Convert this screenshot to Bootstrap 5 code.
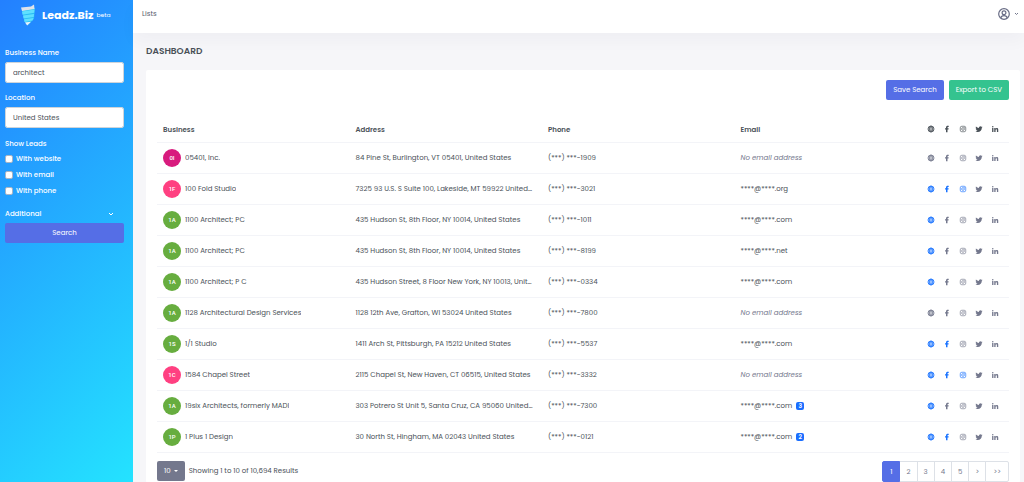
<!DOCTYPE html>
<html lang="en">
<head>
<meta charset="utf-8">
<meta name="viewport" content="width=device-width, initial-scale=1">
<title>Leadz.Biz – Dashboard</title>
<link href="https://cdn.jsdelivr.net/npm/bootstrap@5.3.0/dist/css/bootstrap.min.css" rel="stylesheet">
<style>
  body { font-family: Poppins, Inter, "Liberation Sans", sans-serif; font-size: 7px; line-height: 10px; color: #495057; background: #f6f6f9; }
  .sidebar { flex: 0 0 133px; padding: 4px 9px 0 5px; color: #fff; font-weight: 500; background: linear-gradient(135deg, #2380ff 0%, #24e3ff 100%); }
  .brand { height: 22px; margin-bottom: 22px; padding-left: 15px; gap: 5px; color: #fff; font-size: 11px; font-weight: 700; }
  .brand svg { width: 17px; height: 22px; }
  .brand small { font-size: 6px; font-weight: 400; margin-left: -2px; }
  .sidebar .form-label { display: block; margin-bottom: 4px; }
  .sidebar .form-control { height: 21px; padding: 0 7px; margin-bottom: 10px; font-size: 7px; line-height: 10px; border: 1px solid #ced4da; border-radius: 2px; color: #495057; }
  .sidebar fieldset { padding-top: 1px; }
  .checks { gap: 6px; margin-bottom: 13px; padding-top: 1px; }
  .checks label { display: flex; align-items: center; gap: 3px; }
  .checks input { appearance: none; width: 8px; height: 8px; margin: 0; background: #fff; border: 1px solid #a9b4c4; border-radius: 2px; }
  .checks input:checked { background: #556ee6; }
  .btn { font-size: 7px; line-height: 10px; padding: 5px 7px; border: 0; border-radius: 2px; color: #fff; }
  .btn-violet, .btn-violet:hover { background: #556ee6; color: #fff; }
  .btn-mint, .btn-mint:hover { background: #34c38f; color: #fff; }
  .btn-slate, .btn-slate:hover { background: #74788d; color: #fff; }
  .btn.dropdown-toggle::after { border-width: 2px 2px 0; vertical-align: 1px; margin-left: 3px; }
  .actions { gap: 5px; }
  .plain-btn { border: 0; background: none; padding: 0; color: inherit; font-weight: inherit; }
  .topbar { height: 33px; padding: 0 5px 5px 9px; background: #fff; box-shadow: 0 8px 16px rgba(18, 38, 63, .03); }
  .topbar a { color: #555b6d; text-decoration: none; }
  .content { padding: 13px 4px 0 13px; }
  .content h1 { margin: 0 0 14px; font-size: 9px; line-height: 10px; font-weight: 600; }
  .panel { background: #fff; border-radius: 2px; padding: 10px 11px 1px; }
  .leads { table-layout: fixed; margin: 16px 0 8px; color: #495057; }
  .leads th, .leads td { height: 31px; padding: 1px 6px 0; vertical-align: middle; border-bottom: 1px solid #f3f4f8; background: none; color: inherit; }
  .leads thead th { height: 26px; padding-top: 2px; font-weight: 600; }
  .leads .links-col { width: 82px; padding: 0; }
  .leads em { color: #74788d; }
  .links { gap: 8px; }
  .links a, .links span { display: block; width: 8px; height: 8px; color: #74788d; }
  .links a.on { color: #1a73ff; }
  thead .links span { color: #495057; }
  .links svg { display: block; width: 8px; height: 8px; }
  .avatar { flex: 0 0 18px; height: 18px; border-radius: 50%; color: #fff; font-family: Roboto, sans-serif; font-size: 6px; font-weight: 500; }
  .count { background: #1a6eff; color: #fff; border-radius: 2px; padding: 0 2px; font-size: 6px; line-height: 8px; min-width: 8px; font-weight: 600; }
  .pagination { --bs-pagination-color: #74788d; --bs-pagination-border-color: #dde1e7; --bs-pagination-font-size: 7px; --bs-pagination-padding-x: 6px; --bs-pagination-padding-y: 4px; --bs-pagination-border-radius: 2px; --bs-pagination-active-bg: #556ee6; --bs-pagination-active-border-color: #556ee6; }
  .page-link { line-height: 11px; text-align: center; min-width: 18px; }
  .page-item:last-child .page-link { padding-left: 7px; padding-right: 7px; }
</style>
</head>
<body>
<svg class="d-none" aria-hidden="true">
  <symbol id="web" viewBox="0 0 16 16"><g fill="none" stroke="currentColor" stroke-width="1.7"><circle cx="8" cy="8" r="6"/><ellipse cx="8" cy="8" rx="2.700" ry="6"/><path d="M2.500 5.800h11M2.500 10.200h11"/></g></symbol>
  <symbol id="facebook" viewBox="0 0 16 16"><path fill="currentColor" d="M6 14.500V9H4V6.400H6V4.800C6 2.600 7.400 1.500 9.500 1.500h1.900v2.400h-1.200C9.300 3.900 9 4.300 9 5v1.400h2.300L11 9H9v5.500z"/></symbol>
  <symbol id="instagram" viewBox="0 0 16 16"><g fill="none" stroke="currentColor" stroke-width="1.300"><rect x="2.500" y="2.500" width="11" height="11" rx="3.200"/><circle cx="8" cy="8" r="2.700"/></g><circle cx="11.200" cy="4.800" r=".9" fill="currentColor"/></symbol>
  <symbol id="twitter" viewBox="-1 -1 18 18"><path fill="currentColor" d="M5 15c6 0 9.300-5 9.300-9.300v-.4A6.600 6.600 0 0 0 16 3.500a6.500 6.500 0 0 1-1.900.5 3.300 3.300 0 0 0 1.400-1.800 6.500 6.500 0 0 1-2 .8 3.300 3.300 0 0 0-5.600 3A9.300 9.300 0 0 1 1.100 2.600a3.300 3.300 0 0 0 1 4.400 3.200 3.200 0 0 1-1.500-.4 3.300 3.300 0 0 0 2.600 3.200 3.200 3.200 0 0 1-1.500.1 3.300 3.300 0 0 0 3.100 2.300A6.600 6.600 0 0 1 0 13.600 9.300 9.300 0 0 0 5 15"/></symbol>
  <symbol id="linkedin" viewBox="-1 -1 18 18"><path fill="currentColor" d="M1.500 6h3v9h-3zM6.300 6h2.900v1.300C9.700 6.400 10.700 5.800 12 5.800c2.400 0 3.300 1.500 3.300 4V15h-3v-4.600c0-1.300-.3-2.100-1.400-2.100S9.300 9.100 9.300 10.400V15h-3z"/><circle cx="3" cy="3" r="1.700" fill="currentColor"/></symbol>
</svg>

<div class="d-flex min-vh-100">
  <aside class="sidebar">
    <a href="#" class="brand d-flex align-items-center text-decoration-none">
      <svg viewBox="0 0 17 22" aria-hidden="true">
        <path fill="#29bdf5" d="M2 6l13-2-1 11-6 6-3-3z"/>
        <path fill="#dfe3ea" d="M1 3.500L11 2.500l3-2 .5 4.500L2 7z"/>
        <path fill="#5fe0ff" d="M2 7.500l12.500-2-.3 3.200-11.700 2zM3 11.500l11-1.500-.3 3L3.500 14.500zM4 15.300l9.500-1.300-1 2.500-8 1.500z"/>
        <path fill="#e8f3fb" d="M5 18.500l6-.8-3.800 3.800z"/>
      </svg>
      <span>Leadz.Biz</span> <small>beta</small>
    </a>
    <form onsubmit="return false">
      <label class="form-label" for="name">Business Name</label>
      <input class="form-control" id="name" type="text" value="architect">
      <label class="form-label" for="place">Location</label>
      <input class="form-control" id="place" type="text" value="United States">
      <fieldset>
        <div class="form-label" id="show">Show Leads</div>
        <div class="checks d-flex flex-column" role="group" aria-labelledby="show">
          <label><input type="checkbox" name="website">With website</label>
          <label><input type="checkbox" name="email">With email</label>
          <label><input type="checkbox" name="phone">With phone</label>
        </div>
      </fieldset>
      <button type="button" class="plain-btn d-flex justify-content-between align-items-center w-100 pe-2 mb-1">Additional
        <svg width="10" height="8" viewBox="0 0 10 8" fill="none" stroke="currentColor" aria-hidden="true"><path d="M3 3l2 2 2-2"/></svg>
      </button>
      <button type="submit" class="btn btn-violet w-100">Search</button>
    </form>
  </aside>

  <div class="d-flex flex-column flex-grow-1">
    <header class="topbar d-flex justify-content-between align-items-center">
      <a href="#">Lists</a>
      <button type="button" class="plain-btn d-flex align-items-center gap-1" aria-label="Account">
        <svg width="12" height="12" viewBox="0 0 12 12" fill="none" stroke="#686c85" stroke-width="1.200" aria-hidden="true"><circle cx="6" cy="6" r="5.300"/><circle cx="6" cy="4.800" r="1.900"/><path d="M2.800 9.800C3.200 8 4.500 7.700 6 7.700s2.800.3 3.200 2.100"/></svg>
        <svg width="5" height="4" viewBox="0 0 5 4" fill="none" stroke="#74788d" aria-hidden="true"><path d="M1 1l1.500 1.500L4 1"/></svg>
      </button>
    </header>
    <main class="content d-flex flex-column flex-grow-1">
      <h1>DASHBOARD</h1>
      <section class="panel flex-grow-1">
        <div class="actions d-flex justify-content-end">
          <button type="button" class="btn btn-violet">Save Search</button>
          <button type="button" class="btn btn-mint">Export to CSV</button>
        </div>
        <table class="table leads">
          <thead><tr><th>Business</th><th>Address</th><th>Phone</th><th>Email</th><th class="links-col" id="head-links"></th></tr></thead>
          <tbody id="rows"></tbody>
        </table>
        <div class="d-flex justify-content-between align-items-center">
          <div class="d-flex align-items-center gap-1">
            <button type="button" class="btn btn-slate dropdown-toggle" data-bs-toggle="dropdown">10</button>
            <span>Showing 1 to 10 of 10,694 Results</span>
          </div>
          <nav aria-label="Result pages">
            <ul class="pagination mb-0">
              <li class="page-item active"><a class="page-link" href="#">1</a></li>
              <li class="page-item"><a class="page-link" href="#">2</a></li>
              <li class="page-item"><a class="page-link" href="#">3</a></li>
              <li class="page-item"><a class="page-link" href="#">4</a></li>
              <li class="page-item"><a class="page-link" href="#">5</a></li>
              <li class="page-item"><a class="page-link" href="#">&gt;</a></li>
              <li class="page-item"><a class="page-link" href="#">&gt;&gt;</a></li>
            </ul>
          </nav>
        </div>
      </section>
    </main>
  </div>
</div>
<script src="https://cdn.jsdelivr.net/npm/bootstrap@5.3.0/dist/js/bootstrap.bundle.min.js"></script>
<script>
  const networks = ['web', 'facebook', 'instagram', 'twitter', 'linkedin'];
  const icon = n => `<svg aria-hidden="true"><use href="#${n}"/></svg>`;
  // initials, colour, business, address, phone ending, email ending, number of linked networks, extra emails
  const leads = [
    ['0I', '#d81b7e', '05401, Inc.', '84 Pine St, Burlington, VT 05401, United States', '1909', '', 0],
    ['1F', '#ff4081', '100 Fold Studio', '7325 93 U.S. S Suite 100, Lakeside, MT 59922 United…', '3021', 'org', 3],
    ['1A', '#67ad3f', '1100 Architect; PC', '435 Hudson St, 8th Floor, NY 10014, United States', '1011', 'com', 1],
    ['1A', '#67ad3f', '1100 Architect; PC', '435 Hudson St, 8th Floor, NY 10014, United States', '8199', 'net', 1],
    ['1A', '#67ad3f', '1100 Architect; P C', '435 Hudson Street, 8 Floor New York, NY 10013, Unit…', '0334', 'com', 1],
    ['1A', '#67ad3f', '1128 Architectural Design Services', '1128 12th Ave, Grafton, WI 53024 United States', '7800', '', 0],
    ['1S', '#67ad3f', '1/1 Studio', '1411 Arch St, Pittsburgh, PA 15212 United States', '5537', 'com', 2],
    ['1C', '#ff4081', '1584 Chapel Street', '2115 Chapel St, New Haven, CT 06515, United States', '3332', '', 3],
    ['1A', '#67ad3f', '19six Architects, formerly MADI', '303 Potrero St Unit 5, Santa Cruz, CA 95060 United…', '7300', 'com', 1, 3],
    ['1P', '#67ad3f', '1 Plus 1 Design', '30 North St, Hingham, MA 02043 United States', '0121', 'com', 2, 2]
  ];
  document.getElementById('head-links').innerHTML =
    `<div class="links d-flex">${networks.map(n => `<span>${icon(n)}</span>`).join('')}</div>`;
  document.getElementById('rows').innerHTML = leads.map(([initials, color, name, address, phone, mail, linked, extra]) => `
    <tr>
      <td><div class="d-flex align-items-center gap-1"><span class="avatar d-flex align-items-center justify-content-center" style="background:${color}">${initials}</span><span class="text-truncate">${name}</span></div></td>
      <td class="text-truncate">${address}</td>
      <td>(***) ***-${phone}</td>
      <td>${mail ? `****@****.${mail}` : '<em>No email address</em>'}${extra ? `<span class="count d-inline-block text-center ms-1">${extra}</span>` : ''}</td>
      <td class="links-col"><div class="links d-flex">${networks.map((n, i) => `<a href="#" aria-label="${n}" class="${i < linked ? 'on' : ''}">${icon(n)}</a>`).join('')}</div></td>
    </tr>`).join('');
</script>
</body>
</html>
